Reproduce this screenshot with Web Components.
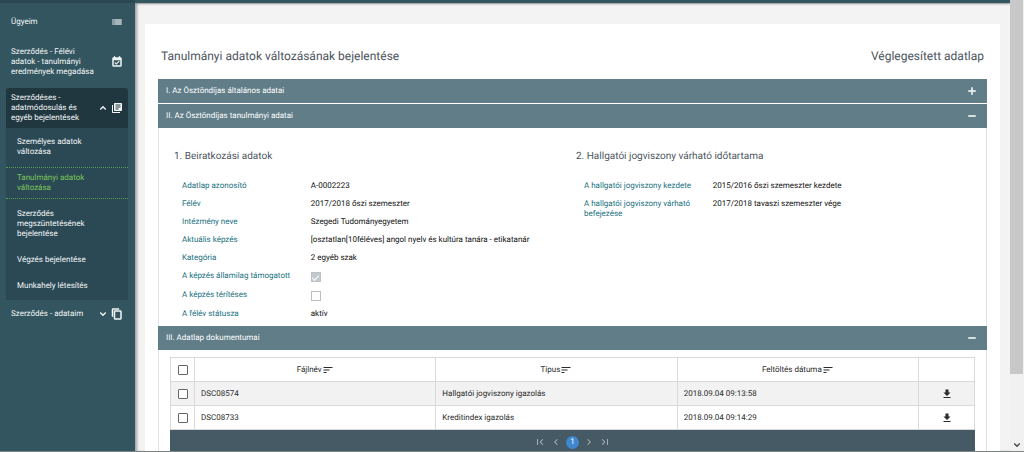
<!DOCTYPE html>
<html lang="hu">
<head>
<meta charset="utf-8">
<title>Tanulmányi adatok változásának bejelentése</title>
<style>
  html, body { margin: 0; height: 100%; }
  body { font: 400 8px/10px Roboto, "Liberation Sans", sans-serif; color: #222; overflow: hidden; text-rendering: geometricPrecision; }
</style>
</head>
<body>
<app-shell>
  <side-nav slot="nav"></side-nav>
  <data-card>
    <accordion-panel heading="I. Az Ösztöndíjas általános adatai"></accordion-panel>
    <accordion-panel heading="II. Az Ösztöndíjas tanulmányi adatai" open>
      <study-data></study-data>
    </accordion-panel>
    <accordion-panel heading="III. Adatlap dokumentumai" open>
      <document-table></document-table>
    </accordion-panel>
  </data-card>
  <page-scroll slot="scroll"></page-scroll>
</app-shell>

<script>
const paths = {
  list: '<path d="M3 13h2v-2H3v2zm0 4h2v-2H3v2zm0-8h2V7H3v2zm4 4h14v-2H7v2zm0 4h14v-2H7v2zM7 7v2h14V7H7z" stroke="currentColor" opacity=".8"/>',
  event: '<path d="M16.53 11.06L15.47 10l-4.88 4.88-2.12-2.12-1.06 1.06L10.59 17l5.94-5.94zM19 3h-1V1h-2v2H8V1H6v2H5c-1.11 0-2 .9-2 2v14c0 1.1.89 2 2 2h14c1.1 0 2-.9 2-2V5c0-1.1-.9-2-2-2zm0 16H5V8h14v11z" stroke="currentColor"/>',
  library: '<path d="M4 6H2v14c0 1.1.9 2 2 2h14v-2H4V6zm16-4H8c-1.1 0-2 .9-2 2v12c0 1.1.9 2 2 2h12c1.1 0 2-.9 2-2V4c0-1.1-.9-2-2-2zm-1 9H9V9h10v2zm-4 4H9v-2h6v2zm4-8H9V5h10v2z"/>',
  copy: '<path d="M16 1H4c-1.1 0-2 .9-2 2v14h2V3h12V1zm3 4H8c-1.1 0-2 .9-2 2v14c0 1.1.9 2 2 2h11c1.1 0 2-.9 2-2V7c0-1.1-.9-2-2-2zm0 16H8V7h11v14z" stroke="currentColor"/>',
  up: '<path d="M12 8l-6 6 1.41 1.41L12 10.83l4.59 4.58L18 14z" stroke="currentColor"/>',
  down: '<path d="M16.59 8.59L12 13.17 7.41 8.59 6 10l6 6 6-6z" stroke="currentColor"/>',
  plus: '<path d="M19 13h-6v6h-2v-6H5v-2h6V5h2v6h6v2z" stroke="currentColor"/>',
  minus: '<path d="M19 13H5v-2h14v2z" stroke="currentColor"/>',
  sort: '<path d="M3 18h6v-2H3v2zM3 6v2h18V6H3zm0 7h12v-2H3v2z"/>',
  download: '<path d="M19 9h-4V3H9v6H5l7 7 7-7zM5 18v2h14v-2H5z"/>',
  first: '<path d="M18.41 16.59L13.82 12l4.59-4.59L17 6l-6 6 6 6zM6 6h2v12H6z"/>',
  prev: '<path d="M15.41 7.41L14 6l-6 6 6 6 1.41-1.41L10.83 12z"/>',
  next: '<path d="M10 6L8.59 7.41 13.17 12l-4.58 4.59L10 18l6-6z"/>',
  last: '<path d="M5.59 7.41L10.18 12l-4.59 4.59L7 18l6-6-6-6zM16 6h2v12h-2z"/>'
};
const icon = (n, s = 12) => `<svg width="${s}" height="${s}" viewBox="0 0 24 24" fill="currentColor" aria-hidden="true">${paths[n]}</svg>`;
const reset = '*{box-sizing:border-box}button{font:inherit;color:inherit;background:none;border:0;padding:0;margin:0;cursor:pointer;text-rendering:inherit}a{color:inherit;text-decoration:none}svg{display:block;flex:none}';
const define = (name, render) => customElements.define(name, class extends HTMLElement {
  connectedCallback() {
    if (!this.shadowRoot) this.attachShadow({ mode: 'open' }).innerHTML = render(this);
  }
});

define('app-shell', () => `<style>${reset}
  :host{display:grid;box-sizing:border-box;grid-template-columns:135px minmax(0,1fr) 14px;height:100vh;overflow:hidden;background:#f3f3f3;border-bottom:1px solid #7d8486}
  .page{display:flex;flex-direction:column;min-width:0;overflow:hidden;box-shadow:inset 3px 0 3px -1px #9a9fa1}
  .top{flex:none;height:3px;background:#33565f;box-shadow:0 1px 2px #8a9194}
  main{padding:21px 10px 24px}
</style>
<slot name="nav"></slot>
<div class="page"><div class="top"></div><main><slot></slot></main></div>
<slot name="scroll"></slot>`);

define('nav-item', el => `<style>${reset}
  :host{display:block}
  a{display:flex;align-items:center;justify-content:space-between;min-height:28px;padding:5px;border-radius:3px 3px 0 0}
  :host([active]) a{background:#203740}
  .text{max-width:84px}
  .icons{display:flex;gap:2px}
</style>
<a href="#"><span class="text"><slot></slot></span><span class="icons">${el.getAttribute('icons').split(' ').map(n => icon(n)).join('')}</span></a>`);

define('side-nav', () => `<style>${reset}
  :host{display:block;background:#33555f;color:#f2f6f7;border-top:3px solid #2b4752;overflow:hidden}
  nav{display:flex;flex-direction:column;padding:5px 7px 0 6px}
  nav-item{margin-bottom:6px}
  .group nav-item{margin:0}
  ul{list-style:none;margin:0;padding:1px 0;background:#2b4955}
  li a{display:block;padding:8px 32px 8px 11px}
  li.current{padding:2px 0;color:#7cc457}
  li.current a{padding:5px 32px 5px 11px;border:dotted #5c9a50;border-width:1px 0}
</style>
<nav>
  <nav-item icons="list">Ügyeim</nav-item>
  <nav-item icons="event">Szerződés - Félévi adatok - tanulmányi eredmények megadása</nav-item>
  <div class="group">
    <nav-item icons="up library" active>Szerződéses - adatmódosulás és egyéb bejelentések</nav-item>
    <ul>
      <li><a href="#">Személyes adatok változása</a></li>
      <li class="current"><a href="#" aria-current="page">Tanulmányi adatok változása</a></li>
      <li><a href="#">Szerződés megszüntetésének bejelentése</a></li>
      <li><a href="#">Végzés bejelentése</a></li>
      <li><a href="#">Munkahely létesítés</a></li>
    </ul>
  </div>
  <nav-item icons="down copy">Szerződés - adataim</nav-item>
</nav>`);

define('data-card', () => `<style>${reset}
  :host{display:block;background:#fff;padding:22px 13px 24px}
  header{display:flex;justify-content:space-between;padding:0 3px;margin-bottom:13px;color:#4d5560}
  h1,p{margin:0;font-size:12px;font-weight:400;line-height:20px}
  .panels{display:flex;flex-direction:column;gap:1px}
</style>
<header><h1>Tanulmányi adatok változásának bejelentése</h1><p>Véglegesített adatlap</p></header>
<div class="panels"><slot></slot></div>`);

define('accordion-panel', el => {
  const open = el.hasAttribute('open');
  return `<style>${reset}
  :host{display:block}
  h2{margin:0;font:inherit}
  button{display:flex;width:100%;height:24px;align-items:center;justify-content:space-between;padding:0 9px 0 8px;background:#607d88;color:#fff;text-align:left}
  .body{border:solid #dde2e6;border-width:0 1px}
</style>
<h2><button type="button" aria-expanded="${open}">${el.getAttribute('heading')}${icon(open ? 'minus' : 'plus')}</button></h2>
${open ? '<div class="body"><slot></slot></div>' : ''}`;
});

define('data-row', el => {
  const check = el.hasAttribute('check');
  const label = el.getAttribute('label');
  return `<style>${reset}
  :host{display:grid;grid-template-columns:33fr 68fr;padding:4px 0;color:#111}
  .name{color:#20717f}
  .check{display:flex;align-items:center;padding-top:1px}
  input{appearance:none;width:10px;height:10px;margin:0;border:1px solid #bcc3c6;background:#fff;display:grid;place-items:center}
  input:checked{background:#c3cace}
  input:checked::after{content:"";width:6px;height:3px;border:solid #fff;border-width:0 0 1px 1px;transform:rotate(-45deg)}
</style>` + (check
    ? `<label class="name" for="c">${label}</label><span class="check"><input id="c" type="checkbox" disabled ${el.getAttribute('check') === 'on' ? 'checked' : ''}></span>`
    : `<span class="name">${label}</span><span><slot></slot></span>`);
});

define('data-section', el => `<style>${reset}
  :host{display:block}
  h3{margin:0 0 12px;font-size:10px;font-weight:400;line-height:16px;color:#4d5560}
  .rows{padding-left:8px}
</style>
<h3>${el.getAttribute('heading')}</h3><div class="rows"><slot></slot></div>`);

define('study-data', () => `<style>${reset}
  :host{display:grid;grid-template-columns:1fr 1fr;padding:21px 8px 2px 15px}
</style>
<data-section heading="1. Beiratkozási adatok">
  <data-row label="Adatlap azonosító">A-0002223</data-row>
  <data-row label="Félév">2017/2018 őszi szemeszter</data-row>
  <data-row label="Intézmény neve">Szegedi Tudományegyetem</data-row>
  <data-row label="Aktuális képzés">[osztatlan[10féléves] angol nyelv és kultúra tanára - etikatanár</data-row>
  <data-row label="Kategória">2 egyéb szak</data-row>
  <data-row label="A képzés államilag támogatott" check="on"></data-row>
  <data-row label="A képzés térítéses" check="off"></data-row>
  <data-row label="A félév státusza">aktív</data-row>
</data-section>
<data-section heading="2. Hallgatói jogviszony várható időtartama">
  <data-row label="A hallgatói jogviszony kezdete">2015/2016 őszi szemeszter kezdete</data-row>
  <data-row label="A hallgatói jogviszony várható befejezése">2017/2018 tavaszi szemeszter vége</data-row>
</data-section>`);

const files = [
  ['DSC08574', 'Hallgatói jogviszony igazolás', '2018.09.04 09:13:58'],
  ['DSC08733', 'Kreditindex igazolás', '2018.09.04 09:14:29']
];
define('document-table', () => `<style>${reset}
  :host{display:block;padding:7px 11px 0}
  table{width:100%;table-layout:fixed;border-collapse:collapse;color:#2b2b2b}
  th,td{height:24px;padding:0 6px;border:1px solid #d9d9d9;font-weight:400;text-align:left}
  th:first-child,td:first-child{width:24px;padding:0}
  th:last-child,td:last-child{width:56px;padding:0}
  tbody tr:first-child{background:#f2f2f2}
  input{appearance:none;display:block;width:10px;height:10px;margin:0 auto;border:1px solid #666;border-radius:1px;background:#fff}
  button{display:flex;align-items:center;justify-content:center;margin:0 auto}
</style>
<table>
  <thead><tr><th><input type="checkbox" aria-label="Összes kijelölése"></th>
  ${['Fájlnév', 'Típus', 'Feltöltés dátuma'].map(t => `<th><button type="button">${t}${icon('sort')}</button></th>`).join('')}
  <th></th></tr></thead>
  <tbody>${files.map(f => `<tr><td><input type="checkbox" aria-label="${f[0]}"></td>${f.map(c => `<td>${c}</td>`).join('')}<td><button type="button" aria-label="Letöltés">${icon('download')}</button></td></tr>`).join('')}</tbody>
</table>
<page-picker></page-picker>`);

define('page-picker', () => `<style>${reset}
  :host{display:flex;justify-content:center;align-items:center;gap:4px;height:24px;background:#455a64;color:#a3afb5}
  .now{width:13px;height:13px;border-radius:50%;background:#3f87cf;color:#fff}
</style>
<button type="button" aria-label="Első">${icon('first')}</button>
<button type="button" aria-label="Előző">${icon('prev')}</button>
<button type="button" class="now">1</button>
<button type="button" aria-label="Következő">${icon('next')}</button>
<button type="button" aria-label="Utolsó">${icon('last')}</button>`);

define('page-scroll', () => `<style>${reset}
  :host{display:flex;flex-direction:column;background:#f1f1f1;color:#444}
  .thumb{height:83%;background:#c8c8c8;margin-right:1px}
  svg{margin:auto auto 0}
</style>
<div class="thumb"></div>${icon('down')}`);
</script>
</body>
</html>
